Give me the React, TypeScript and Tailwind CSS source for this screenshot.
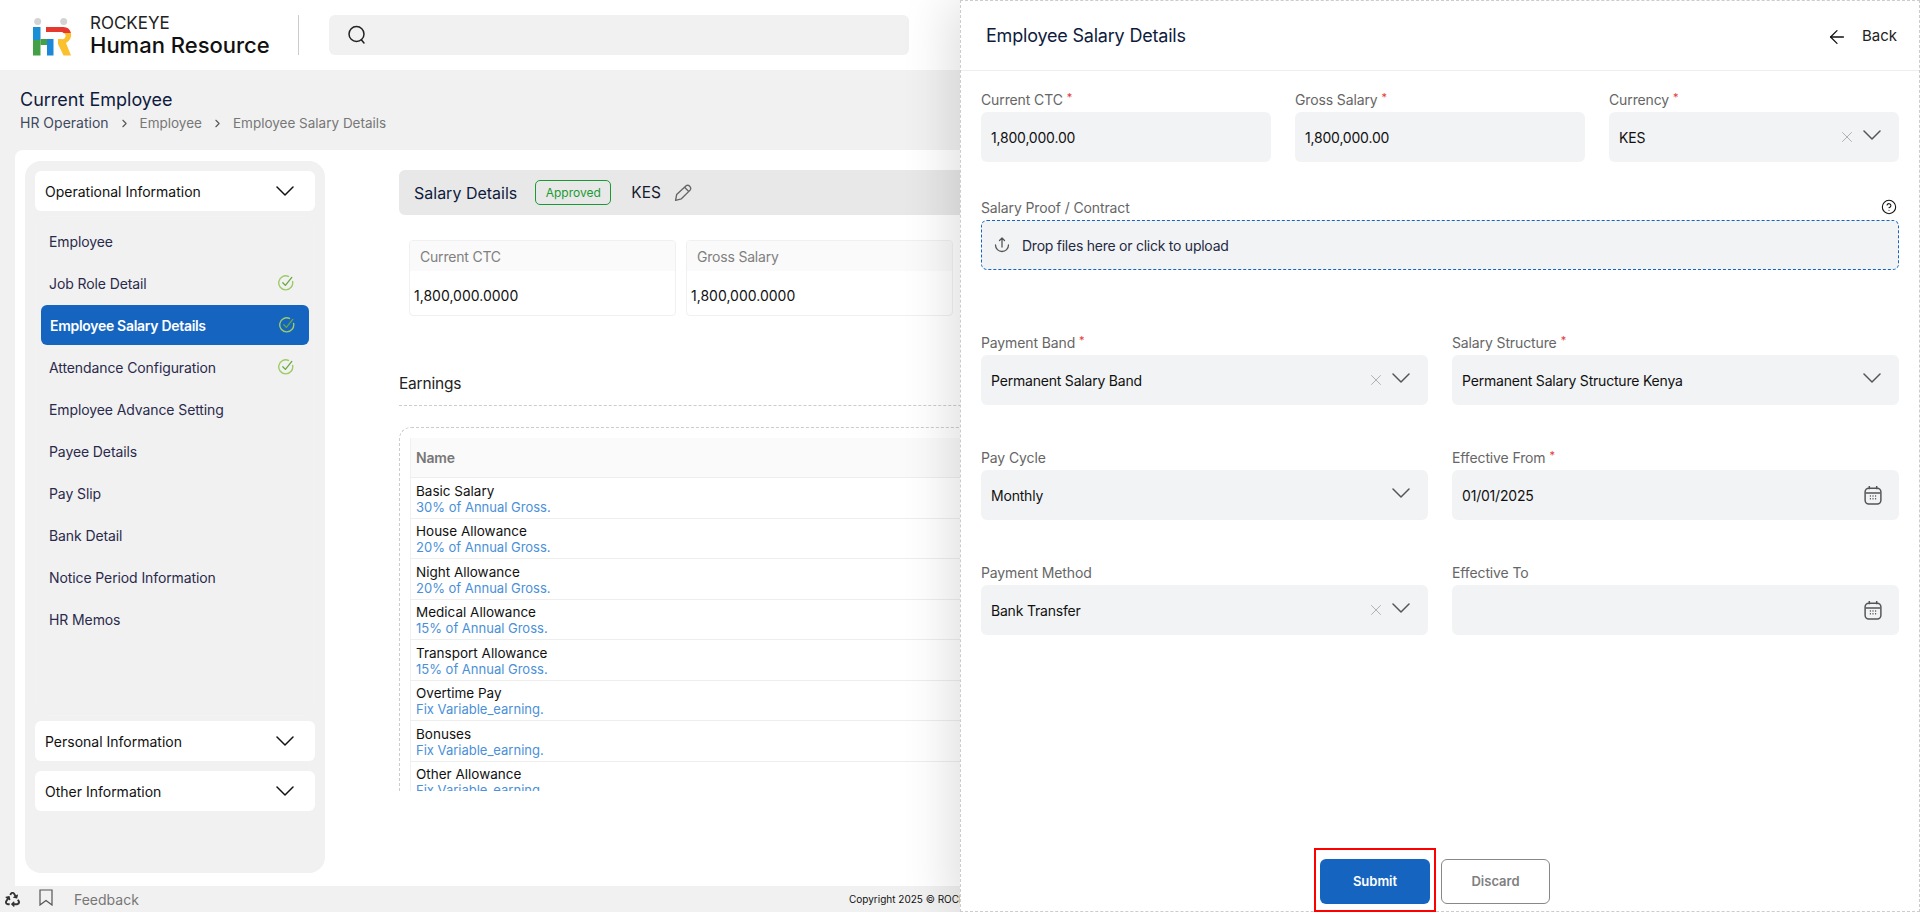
import { ArrowLeft, ChevronRight, CircleHelp, X } from "lucide-react";
import { FaRecycle } from "react-icons/fa";

const items = [
  { t: "Employee", c: false },
  { t: "Job Role Detail", c: true },
  { t: "Employee Salary Details", c: true, a: true },
  { t: "Attendance Configuration", c: true },
  { t: "Employee Advance Setting", c: false },
  { t: "Payee Details", c: false },
  { t: "Pay Slip", c: false },
  { t: "Bank Detail", c: false },
  { t: "Notice Period Information", c: false },
  { t: "HR Memos", c: false },
];

const rows = [
  ["Basic Salary", "30% of Annual Gross."],
  ["House Allowance", "20% of Annual Gross."],
  ["Night Allowance", "20% of Annual Gross."],
  ["Medical Allowance", "15% of Annual Gross."],
  ["Transport Allowance", "15% of Annual Gross."],
  ["Overtime Pay", "Fix Variable_earning."],
  ["Bonuses", "Fix Variable_earning."],
  ["Other Allowance", "Fix Variable_earning."],
];

function Logo() {
  return (
    <svg width="50" height="44" viewBox="0 0 50 44" className="shrink-0">
      <circle cx="9.7" cy="8.5" r="3.5" fill="#d4d4d4" />
      <circle cx="35.7" cy="8.5" r="3.5" fill="#d4d4d4" />
      <rect x="5" y="14" width="7.5" height="13" fill="#1a8fd6" />
      <rect x="5" y="27" width="7.5" height="15.5" fill="#43a047" />
      <rect x="12.5" y="26" width="8" height="6" fill="#43a047" />
      <rect x="19" y="26" width="6.5" height="16.5" fill="#1e88d8" />
      <path d="M18 14h17a8 8 0 0 1 8 6h-7.5a3 3 0 0 0-2-1H18z" fill="#e5392f" />
      <path d="M43 20a9 9 0 0 1-5 10l5 12.500h-7.500L30 31v-5h3a3.200 3.200 0 0 0 2.500-6z" fill="#fbc02d" />
    </svg>
  );
}

function Chevron({ w = 18, h = 9, color = "#111" }: { w?: number; h?: number; color?: string }) {
  return (
    <svg width={w} height={h + 2} viewBox={`0 0 ${w} ${h + 2}`} fill="none" className="shrink-0">
      <path d={`M1 1 L${w / 2} ${h} L${w - 1} 1`} stroke={color} strokeWidth="1.500" strokeLinecap="round" strokeLinejoin="round" />
    </svg>
  );
}

function Check() {
  return (
    <svg width="16" height="16" viewBox="0 0 16 16" fill="none" className="shrink-0">
      <path d="M14.600 6.500A7 7 0 1 1 10.500 1.400" stroke="#9ccc65" strokeWidth="1.400" strokeLinecap="round" />
      <path d="M4.800 7.800 L7.400 10.400 L13.800 2.400" stroke="#68a83f" strokeWidth="1.300" strokeLinecap="round" strokeLinejoin="round" />
    </svg>
  );
}

function Calendar() {
  return (
    <svg width="18" height="20" viewBox="0 0 17 19" fill="none" className="shrink-0" stroke="#555" strokeWidth="1.400">
      <rect x="1" y="3" width="15" height="15" rx="3.500" />
      <path d="M1.500 7.500h14M5 1v3M12 1v3" />
      <path d="M5.500 10.500h1M8 10.500h1M10.500 10.500h1M5.500 13h1M8 13h1M10.500 13h1" strokeWidth="1.500" />
    </svg>
  );
}

function Label({ text, req }: { text: string; req?: boolean }) {
  return (
    <div className="h-5 mb-[3px] flex items-center text-[14px] tracking-[-0.12px] text-[#666666]">
      {text}
      {req && <span className="text-[#e53935] text-[11px] ml-[4px] -mt-[4px]">*</span>}
    </div>
  );
}

function Field({ label, value, req, clear, chevron, calendar }: { label: string; value?: string; req?: boolean; clear?: boolean; chevron?: boolean; calendar?: boolean }) {
  return (
    <div>
      <Label text={label} req={req} />
      <div className="relative h-[50px] rounded-md bg-[#f2f3f5] flex items-center pl-[10px] pr-[17px] text-[14px] tracking-[-0.2px] text-[#111111]">
        <span className="flex-1">{value}</span>
        {clear && <X size={18} className="text-[#aaaaaa] absolute right-[43px] top-[16px]" strokeWidth={1.200} />}
        {chevron && (
          <span className="absolute right-[18px] top-[18px]">
            <Chevron w={18} h={9} color="#555555" />
          </span>
        )}
        {calendar && <Calendar />}
      </div>
    </div>
  );
}

function SectionHead({ t }: { t: string }) {
  return (
    <div className="h-10 shrink-0 rounded-md bg-white flex items-center justify-between pl-[10px] pr-[21px] text-[14px] text-[#111111]">
      <span>{t}</span>
      <Chevron />
    </div>
  );
}

export default function App() {
  return (
    <div className="relative h-[912px] w-[1920px] overflow-hidden bg-[#f1f1f1] flex flex-col font-[family-name:Inter,'Noto_Sans',sans-serif]">
      <header className="h-[70px] shrink-0 bg-white flex items-center">
        <div className="ml-[28px]">
          <Logo />
        </div>
        <div className="ml-[12px] w-[208px] flex flex-col leading-none">
          <span className="text-[17px] text-[#222222] leading-[20px]">ROCKEYE</span>
          <span className="text-[22px] font-medium text-[#111111] leading-[24px]">Human Resource</span>
        </div>
        <div className="w-px h-10 bg-[#cccccc]" />
        <div className="ml-[30px] w-[580px] h-10 rounded-md bg-[#f1f1f1] flex items-center pl-[18px]">
          <svg width="20" height="20" viewBox="0 0 20 20" fill="none" stroke="#222" strokeWidth="1.500">
            <circle cx="9.500" cy="9" r="7.500" />
            <path d="M14.500 15l2.500 3" strokeLinecap="round" />
          </svg>
        </div>
      </header>

      <div className="h-[80px] shrink-0 pl-[20px] pt-[19px]">
        <h1 className="text-[18px] leading-[22px] text-[#0f1b3d]">Current Employee</h1>
        <div className="mt-[2px] flex items-center text-[13.500px] leading-[20px] text-[#777777]">
          <span className="text-[14px] text-[#3f4a5f]">HR Operation</span>
          <ChevronRight size={13} className="mx-[9px] text-[#555555]" />
          <span>Employee</span>
          <ChevronRight size={13} className="mx-[9px] text-[#555555]" />
          <span>Employee Salary Details</span>
        </div>
      </div>

      <main className="flex-1 min-h-0 ml-[15px] bg-white rounded-tl-lg flex">
        <aside className="ml-[10px] mt-[11px] mb-[13px] w-[300px] shrink-0 rounded-2xl bg-[#f1f1f1] px-[10px] pt-[10px] flex flex-col">
          <SectionHead t="Operational Information" />
          <div className="mt-[5px] h-[500px] shrink-0 rounded-xl border border-[#f3f3f3] px-[5px] pt-[3px]">
            {items.map((it) =>
              it.a ? (
                <div key={it.t} className="h-10 my-px rounded-md bg-[#1565c0] flex items-center justify-between pl-[9px] pr-[14px] text-[14px] tracking-[-0.3px] font-semibold text-white">
                  <span>{it.t}</span>
                  <Check />
                </div>
              ) : (
                <div key={it.t} className="h-[42px] flex items-center justify-between pl-[8px] pr-[15px] text-[14px] tracking-[-0.1px] text-[#2b2a4c]">
                  <span>{it.t}</span>
                  {it.c && <Check />}
                </div>
              ),
            )}
          </div>
          <div className="mt-[5px]">
            <SectionHead t="Personal Information" />
          </div>
          <div className="mt-[10px]">
            <SectionHead t="Other Information" />
          </div>
        </aside>

        <section className="ml-[74px] flex-1 min-w-0 pt-[20px] pr-[20px] flex flex-col">
          <div className="h-[45px] rounded-md bg-[#e8e8e8] flex items-center pl-[15px]">
            <span className="text-[16px] text-[#0f1b3d]">Salary Details</span>
            <span className="ml-[18px] w-[76px] h-[25px] rounded-[5px] border border-[#1a9a33] flex items-center justify-center text-[12px] text-[#1a9a33]">Approved</span>
            <span className="ml-[20px] text-[15.500px] text-[#1a1a2e]">KES</span>
            <svg width="19" height="19" viewBox="0 0 18 18" fill="none" stroke="#666" strokeWidth="1.300" className="ml-[13px]" strokeLinejoin="round">
              <path d="M1.500 16.500 L2.500 11 L11.500 2.500 a3 3 0 0 1 4 4 L7 15 Z" />
              <path d="M10 4 l4 4" />
            </svg>
          </div>

          <div className="mt-[25px] pl-[10px] flex gap-[10px]">
            {["Current CTC", "Gross Salary"].map((t) => (
              <div key={t} className="w-[267px] h-[76px] rounded border border-[#f0f0f0] overflow-hidden">
                <div className="h-[30px] bg-[#fafafa] flex items-center pl-[10px] text-[14px] tracking-[-0.2px] text-[#808080]">{t}</div>
                <div className="mt-[15px] pl-[4px] text-[14px] leading-[20px] text-[#111111]">1,800,000.0000</div>
              </div>
            ))}
          </div>

          <div className="mt-[56px] h-[23px] flex items-center text-[15.500px] tracking-[-0.2px] text-[#222222]">Earnings</div>
          <div className="mt-[10px] border-t border-dashed border-[#cccccc]" />

          <div className="mt-[21px] h-[364px] rounded-tl-xl border-l border-t border-dashed border-[#cccccc] pl-[10px] pt-[10px] overflow-hidden">
            <div className="h-full border-l border-[#f0f0f0] overflow-hidden">
              <div className="h-[40px] bg-[#fafafa] border-b border-[#eeeeee] flex items-center pl-[5px] text-[14px] tracking-[-0.2px] font-semibold text-[#777777]">Name</div>
              {rows.map(([a, b]) => (
                <div key={a} className="h-[40.500px] border-b border-[#eeeeee] pl-[5px] pt-[2px] flex flex-col justify-center text-[13.500px] leading-[16px]">
                  <span className="text-[#111111]">{a}</span>
                  <span className="text-[13px] text-[#4a90d9]">{b}</span>
                </div>
              ))}
            </div>
          </div>
        </section>
      </main>

      <footer className="h-[26px] shrink-0 flex items-center relative text-[#777777]">
        <FaRecycle size={15} className="ml-[5px] text-[#333333]" />
        <svg width="14" height="17" viewBox="0 0 14 17" fill="none" stroke="#555" strokeWidth="1.200" className="ml-[19px] -mt-[4px]">
          <path d="M1 1h12v15l-6-4.500L1 16z" />
        </svg>
        <span className="ml-[21px] text-[14px]">Feedback</span>
        <span className="absolute left-[849px] text-[10px] text-[#111111] whitespace-nowrap">Copyright 2025 © ROCKEYE</span>
      </footer>

      <aside className="absolute inset-y-0 right-0 w-[960px] bg-white border border-dashed border-[#cccccc] shadow-[-12px_0_45px_rgba(0,0,0,0.12)] flex flex-col">
        <div className="h-[70px] shrink-0 border-b border-[#eeeeee] flex items-center justify-between pl-[25px] pr-[22px]">
          <h2 className="text-[18px] tracking-[-0.2px] text-[#0f1b3d]">Employee Salary Details</h2>
          <div className="mt-[2px] flex items-center gap-[14px] text-[15px] text-[#222222]">
            <ArrowLeft size={22} strokeWidth={1.400} className="text-[#111111]" />
            <span>Back</span>
          </div>
        </div>

        <div className="flex-1 px-5 pt-[18px] flex flex-col">
          <div className="grid grid-cols-3 gap-x-6">
            <Field label="Current CTC" req value="1,800,000.00" />
            <Field label="Gross Salary" req value="1,800,000.00" />
            <Field label="Currency" req value="KES" clear chevron />
          </div>

          <div className="mt-[35px]">
            <div className="flex items-center justify-between pr-[2px]">
              <Label text="Salary Proof / Contract" />
              <CircleHelp size={16} strokeWidth={1.600} className="text-[#111111] -mt-[3px]" />
            </div>
            <div className="h-[50px] rounded-md bg-[#f2f3f5] border border-dashed border-[#1565c0] flex items-center pl-[12px] text-[14px] tracking-[-0.25px] text-[#1f2a44]">
              <svg width="16" height="16" viewBox="0 0 16 16" fill="none" stroke="#555" strokeWidth="1.300" strokeLinecap="round" strokeLinejoin="round">
                <path d="M8 1v9M5.500 3.500 8 1l2.500 2.500M1.500 8a6.500 6.500 0 0 0 13 0" />
              </svg>
              <span className="ml-[12px]">Drop files here or click to upload</span>
            </div>
          </div>

          <div className="mt-[62px] grid grid-cols-2 gap-x-6 gap-y-[42px]">
            <Field label="Payment Band" req value="Permanent Salary Band" clear chevron />
            <Field label="Salary Structure" req value="Permanent Salary Structure Kenya" chevron />
            <Field label="Pay Cycle" value="Monthly" chevron />
            <Field label="Effective From" req value="01/01/2025" calendar />
            <Field label="Payment Method" value="Bank Transfer" clear chevron />
            <Field label="Effective To" calendar />
          </div>

          <div className="mt-auto pb-[7px] pr-[10px] flex justify-center gap-[11px]">
            <button className="w-[110px] h-[45px] rounded-md bg-[#1565c0] text-[13px] font-semibold text-white">Submit</button>
            <button className="w-[109px] h-[45px] rounded-md bg-white border border-[#888888] text-[13px] font-semibold text-[#808080]">Discard</button>
          </div>
        </div>

        <div className="absolute left-[353px] top-[847px] w-[122px] h-[64px] border-2 border-[#ff0000]" />
      </aside>
    </div>
  );
}
